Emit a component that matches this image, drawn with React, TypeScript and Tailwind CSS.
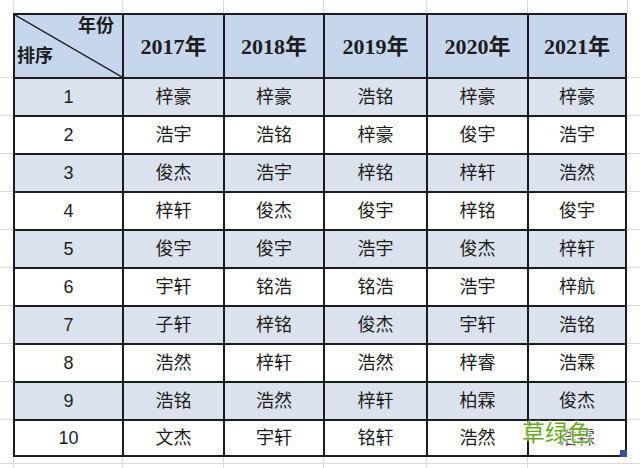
import React from 'react'

const YEARS = ['2017年', '2018年', '2019年', '2020年', '2021年']

const ROWS = [
  ['梓豪', '梓豪', '浩铭', '梓豪', '梓豪'],
  ['浩宇', '浩铭', '梓豪', '俊宇', '浩宇'],
  ['俊杰', '浩宇', '梓铭', '梓轩', '浩然'],
  ['梓轩', '俊杰', '俊宇', '梓铭', '俊宇'],
  ['俊宇', '俊宇', '浩宇', '俊杰', '梓轩'],
  ['宇轩', '铭浩', '铭浩', '浩宇', '梓航'],
  ['子轩', '梓铭', '俊杰', '宇轩', '浩铭'],
  ['浩然', '梓轩', '浩然', '梓睿', '浩霖'],
  ['浩铭', '浩然', '梓轩', '柏霖', '俊杰'],
  ['文杰', '宇轩', '铭轩', '浩然', '浩霖'],
]

const SANS = "font-['Liberation_Sans','Noto_Sans_CJK_SC',sans-serif]"

export default function App() {
  return (
    <div className={`relative h-[468px] w-[640px] overflow-hidden bg-white text-[#1d1d1d] ${SANS}`}>
      <div className="grid grid-cols-[13px_109px_101px_100px_103px_101px_100px_13px] grid-rows-[13px_64px_repeat(10,38px)_6px_5px]">
        {/* top gutter row */}
        <div />
        {YEARS.map((y) => (
          <div key={'top' + y} className="border-l border-[#dadada]" />
        ))}
        <div className="border-l border-[#dadada]" />
        <div className="border-l border-[#dadada]" />

        {/* header */}
        <div />
        <div className="relative flex flex-col justify-between border-l-2 border-t-2 border-[#1c1c1c] bg-[#c6d6ed] pb-[12px] pl-[2px] pr-2 pt-[2px] text-[18px] font-bold leading-none">
          <svg className="absolute inset-0 h-full w-full" viewBox="0 0 100 100" preserveAspectRatio="none">
            <line x1="0" y1="0" x2="100" y2="100" stroke="#1c1c1c" strokeWidth="1.4" vectorEffect="non-scaling-stroke" />
          </svg>
          <span className="self-end">年份</span>
          <span className="self-start">排序</span>
        </div>
        {YEARS.map((y, i) => (
          <div
            key={y}
            className={`flex items-center justify-center border-l-2 border-t-2 border-[#1c1c1c] bg-[#c6d6ed] font-['Liberation_Serif','Noto_Sans_CJK_SC',serif] text-[22px] font-bold ${i === 4 ? 'border-r-2' : ''}`}
          >
            {y}
          </div>
        ))}
        <div />

        {/* body rows */}
        {ROWS.map((row, r) => {
          const bg = r % 2 === 0 ? 'bg-[#dbe2ee]' : 'bg-white'
          const last = r === ROWS.length - 1
          return (
            <React.Fragment key={r}>
              <div className="border-t border-[#dadada]" />
              <div className={`flex items-center justify-center border-l-2 border-t-2 border-[#1c1c1c] text-[18px] ${bg} ${last ? 'border-b-2' : ''}`}>
                {r + 1}
              </div>
              {row.map((name, c) => (
                <div
                  key={c}
                  className={`relative flex items-center justify-center border-l-2 border-t-2 border-[#1c1c1c] text-[18px] ${bg} ${c === 4 ? 'border-r-2' : ''} ${last ? 'border-b-2' : ''}`}
                >
                  <span className={last && c === 4 ? 'text-[#444]' : ''}>{name}</span>
                  {last && c === 4 && (
                    <span className="absolute -bottom-[2px] -right-[2px] h-[7px] w-[7px] bg-[#3d4d9e]" />
                  )}
                </div>
              ))}
              <div className="border-t border-[#dadada]" />
            </React.Fragment>
          )
        })}

        {/* bottom gutter */}
        <div />
        {YEARS.map((y) => (
          <div key={'b1' + y} className="border-l border-[#dadada]" />
        ))}
        <div className="border-l border-[#dadada]" />
        <div />
        <div className="border-t border-[#dadada]" />
        {YEARS.map((y) => (
          <div key={'b2' + y} className="border-l border-t border-[#dadada]" />
        ))}
        <div className="border-l border-t border-[#dadada]" />
        <div className="border-t border-[#dadada]" />
      </div>

      {/* watermark */}
      <span className="absolute left-[522px] top-[420px] font-['Noto_Sans_CJK_SC',sans-serif] text-[23px] leading-none text-[#6aaa22] [text-shadow:0_0_3px_#fff,0_0_3px_#fff,0_0_2px_#fff]">
        草绿色
      </span>
    </div>
  )
}
